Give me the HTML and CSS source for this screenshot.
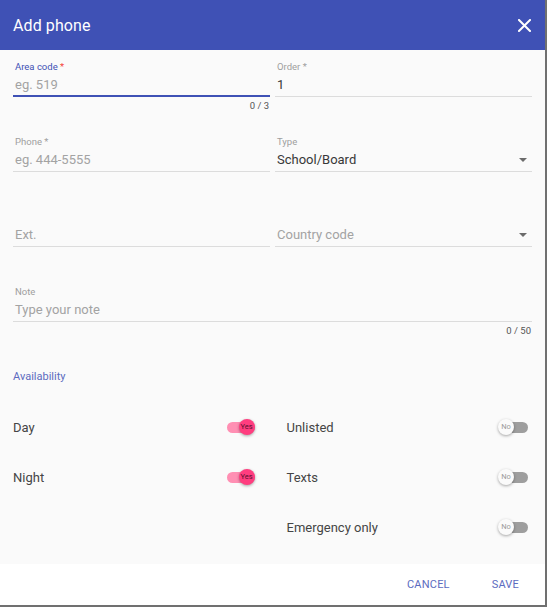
FILE: index.html
```html
<!DOCTYPE html>
<html>
<head>
<meta charset="utf-8">
<link rel="stylesheet" href="styles.css">
</head>
<body>
<div class="dialog">
  <header class="dialog-header">
    <h1 class="dialog-title">Add phone</h1>
    <svg class="close" width="13" height="13" viewBox="0 0 13 13"><path d="M1 1 L12 12 M12 1 L1 12" stroke="#fff" stroke-width="2" stroke-linecap="square"/></svg>
  </header>
  <main class="dialog-body">
    <div class="fields">
      <div class="cell">
        <div class="field focused">
          <div class="label">Area code <span class="req">*</span></div>
          <div class="input placeholder">eg. 519</div>
        </div>
        <div class="helper">0 / 3</div>
      </div>
      <div class="cell">
        <div class="field">
          <div class="label">Order *</div>
          <div class="input">1</div>
        </div>
        <div class="helper"></div>
      </div>
      <div class="cell">
        <div class="field">
          <div class="label">Phone *</div>
          <div class="input placeholder">eg. 444-5555</div>
        </div>
        <div class="helper"></div>
      </div>
      <div class="cell">
        <div class="field">
          <div class="label">Type</div>
          <div class="input select">School/Board<span class="arrow"></span></div>
        </div>
        <div class="helper"></div>
      </div>
      <div class="cell">
        <div class="field">
          <div class="label"></div>
          <div class="input placeholder">Ext.</div>
        </div>
        <div class="helper"></div>
      </div>
      <div class="cell">
        <div class="field">
          <div class="label"></div>
          <div class="input select placeholder">Country code<span class="arrow"></span></div>
        </div>
        <div class="helper"></div>
      </div>
      <div class="cell wide">
        <div class="field">
          <div class="label">Note</div>
          <div class="input placeholder">Type your note</div>
        </div>
        <div class="helper">0 / 50</div>
      </div>
    </div>
    <h2 class="section">Availability</h2>
    <div class="toggles">
      <div class="toggle-row"><span class="toggle-label">Day</span><span class="switch on"><span class="track"></span><span class="thumb">Yes</span></span></div>
      <div class="toggle-row"><span class="toggle-label">Unlisted</span><span class="switch"><span class="track"></span><span class="thumb">No</span></span></div>
      <div class="toggle-row"><span class="toggle-label">Night</span><span class="switch on"><span class="track"></span><span class="thumb">Yes</span></span></div>
      <div class="toggle-row"><span class="toggle-label">Texts</span><span class="switch"><span class="track"></span><span class="thumb">No</span></span></div>
      <div class="toggle-row empty"></div>
      <div class="toggle-row"><span class="toggle-label">Emergency only</span><span class="switch"><span class="track"></span><span class="thumb">No</span></span></div>
    </div>
  </main>
  <footer class="dialog-footer">
    <button class="btn">CANCEL</button>
    <button class="btn">SAVE</button>
  </footer>
</div>
</body>
</html>
```

FILE: styles.css
```css
* { box-sizing: border-box; }
html, body { margin: 0; padding: 0; background: #ffffff; }
body { font-family: Roboto, "Noto Sans", sans-serif; }

.dialog {
  width: 547px;
  height: 607px;
  display: flex;
  flex-direction: column;
  border-right: 2px solid #707070;
  border-bottom: 2px solid #707070;
  background: #fafafa;
}

.dialog-header {
  height: 50px;
  flex: none;
  background: #3f51b5;
  display: flex;
  align-items: center;
  justify-content: space-between;
  padding: 0 14px 0 13px;
}
.dialog-title {
  margin: 0;
  font-size: 16px;
  font-weight: 400;
  color: #fff;
  letter-spacing: 0.1px;
}
.close { display: block; margin-top: 1px; }

.dialog-body {
  flex: 1;
  background: #fafafa;
  padding: 11px 13px 0 13px;
}

.fields {
  display: grid;
  grid-template-columns: 1fr 1fr;
  column-gap: 5px;
  row-gap: 23px;
}
.cell.wide { grid-column: 1 / 3; }

.field { border-bottom: 1px solid #dcdcdc; }
.field.focused { border-bottom: 2px solid #3f51b5; }
.label {
  height: 12px;
  line-height: 12px;
  font-size: 9.5px;
  color: #9e9e9e;
  padding-left: 2px;
}
.focused .label { color: #3f51b5; }
.req { color: #f44336; }
.input {
  height: 23px;
  line-height: 24px;
  font-size: 13px;
  color: #383838;
  padding-left: 2px;
  position: relative;
}
.focused .input { height: 22px; }
.input.placeholder { color: #a3a3a3; }
.arrow {
  position: absolute;
  right: 5px;
  top: 10px;
  width: 0;
  height: 0;
  border-left: 4px solid transparent;
  border-right: 4px solid transparent;
  border-top: 4px solid #6b6b6b;
}
.helper {
  height: 16px;
  padding-top: 3px;
  line-height: 12px;
  font-size: 9.5px;
  color: #555;
  text-align: right;
  padding-right: 1px;
}

.section {
  margin: 32px 0 0 0;
  height: 14px;
  line-height: 14px;
  font-size: 11px;
  font-weight: 400;
  color: #5c6bc0;
}

.toggles {
  margin-top: 18px;
  display: grid;
  grid-template-columns: 1fr 1fr;
  column-gap: 28px;
}
.toggle-row {
  height: 50px;
  display: flex;
  align-items: center;
  justify-content: space-between;
}
.toggle-label { font-size: 13px; color: #454545; }

.switch {
  position: relative;
  width: 30px;
  height: 16px;
  margin-right: 4px;
}
.track {
  position: absolute;
  left: 2px;
  right: 0;
  top: 3px;
  height: 11px;
  border-radius: 6px;
  background: #9e9e9e;
}
.thumb {
  position: absolute;
  left: 0;
  top: 0;
  width: 16px;
  height: 16px;
  border-radius: 50%;
  background: #fafafa;
  box-shadow: 0 1px 3px rgba(0,0,0,0.35);
  font-size: 7.5px;
  line-height: 16px;
  text-align: center;
  color: #9a9a9a;
}
.switch.on .track { background: #ff8fb3; }
.switch.on .thumb {
  left: 14px;
  background: #ff3d7f;
  color: #5a1030;
}

.dialog-footer {
  height: 41px;
  flex: none;
  background: #ffffff;
  display: flex;
  align-items: center;
  justify-content: flex-end;
  gap: 42px;
  padding-right: 26px;
}
.btn {
  border: 0;
  background: none;
  padding: 0;
  font-family: Roboto, sans-serif;
  font-size: 11px;
  color: #5c6bc0;
  letter-spacing: 0.2px;
}
```
